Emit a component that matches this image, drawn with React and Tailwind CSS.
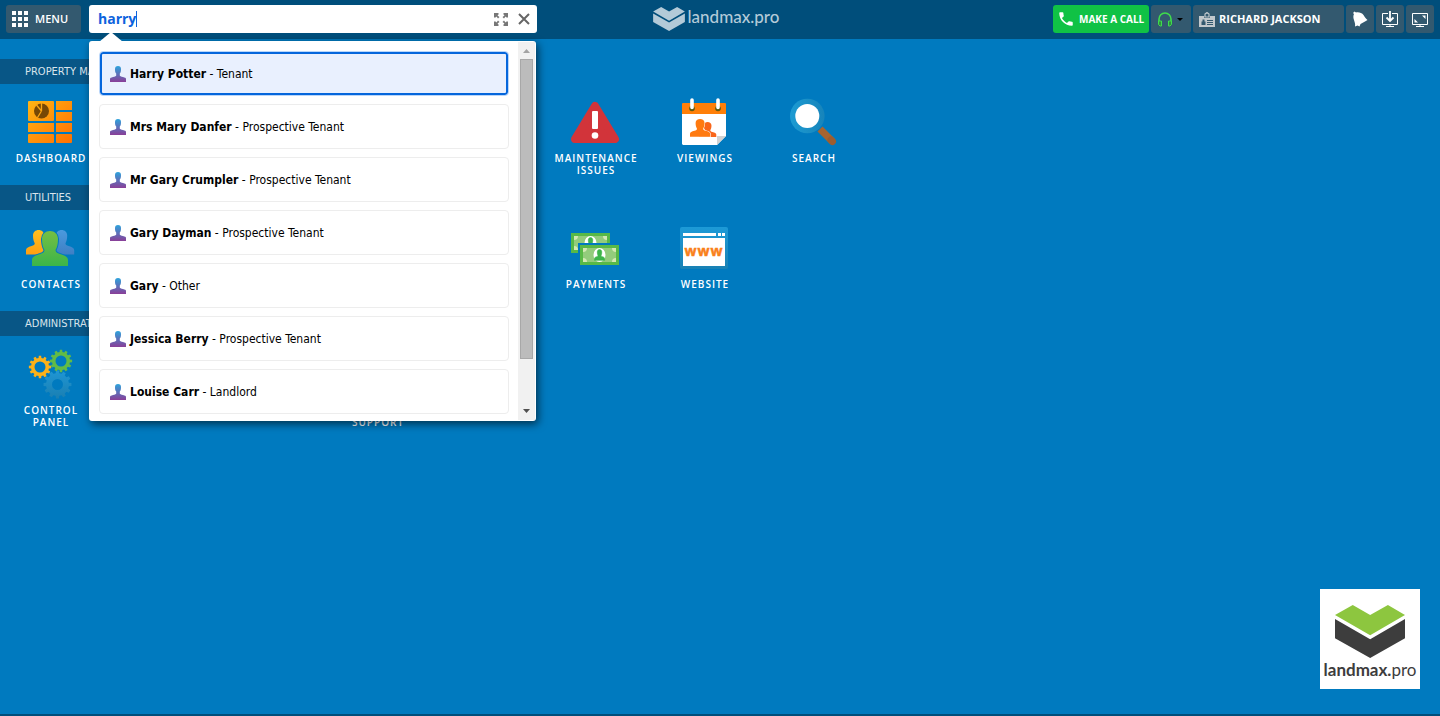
import { useState } from "react";
import clsx from "clsx";
import { MdPhone } from "react-icons/md";

const PERSON =
  "M0 35V29C0 26 3 24.5 8 23C11 22 12.5 21 12.5 19C11 16.5 10 13 10 8C10 3 13.5 0 18 0S26 3 26 8C26 13 25 16.5 23.5 19C23.5 21 25 22 28 23C33 24.5 36 26 36 29V35Z";

const RESULTS = [
  { name: "Harry Potter", role: "Tenant" },
  { name: "Mrs Mary Danfer", role: "Prospective Tenant" },
  { name: "Mr Gary Crumpler", role: "Prospective Tenant" },
  { name: "Gary Dayman", role: "Prospective Tenant" },
  { name: "Gary", role: "Other" },
  { name: "Jessica Berry", role: "Prospective Tenant" },
  { name: "Louise Carr", role: "Landlord" },
];

function gearPath(cx, cy, outer, inner, hole, teeth) {
  const points = [];
  const step = (Math.PI * 2) / teeth;
  for (let i = 0; i < teeth; i++) {
    const a = i * step;
    [
      [inner, -0.3],
      [outer, -0.2],
      [outer, 0.2],
      [inner, 0.3],
    ].forEach(([r, k]) => {
      const t = a + k * step;
      points.push(`${(cx + r * Math.cos(t)).toFixed(2)} ${(cy + r * Math.sin(t)).toFixed(2)}`);
    });
  }
  return `M${points.join("L")}ZM${cx - hole} ${cy}a${hole} ${hole} 0 1 0 ${hole * 2} 0a${hole} ${hole} 0 1 0 ${-hole * 2} 0Z`;
}

function TileSvg({ children }) {
  return (
    <svg viewBox="-1 0 50 48" className="h-12 w-[50px] overflow-visible" aria-hidden="true">
      {children}
    </svg>
  );
}

function DashboardIcon() {
  return (
    <TileSvg>
      <defs>
        <linearGradient id="dash" gradientUnits="userSpaceOnUse" x1="1" y1="3" x2="45" y2="45">
          <stop offset="0" stopColor="#ffb515" />
          <stop offset="1" stopColor="#ff7000" />
        </linearGradient>
      </defs>
      <g fill="url(#dash)">
        <rect x="1" y="3" width="26" height="20" rx="1" />
        <rect x="29" y="3" width="16" height="9" />
        <rect x="29" y="14" width="16" height="9" />
        <rect x="1" y="25" width="26" height="9" />
        <rect x="29" y="25" width="16" height="9" />
        <rect x="1" y="36" width="26" height="9" rx="1" />
        <rect x="29" y="36" width="16" height="9" rx="1" />
      </g>
      <circle cx="14.5" cy="13" r="7.5" fill="#774805" />
      <path d="M14.5 13V5M14.5 13L9 6.5M14.5 13L10.5 19.5" stroke="#fca613" strokeWidth="1.3" fill="none" />
    </TileSvg>
  );
}

function ContactsIcon() {
  return (
    <TileSvg>
      <defs>
        <linearGradient id="conY" x1="0" y1="0" x2="0" y2="1">
          <stop offset="0" stopColor="#ffc020" />
          <stop offset="1" stopColor="#ff9f10" />
        </linearGradient>
        <linearGradient id="conB" x1="0" y1="0" x2="0" y2="1">
          <stop offset="0" stopColor="#4a9ade" />
          <stop offset="1" stopColor="#3f7fc4" />
        </linearGradient>
        <linearGradient id="conG" x1="0" y1="0" x2="0" y2="1">
          <stop offset="0" stopColor="#76bf43" />
          <stop offset="1" stopColor="#3bb54a" />
        </linearGradient>
      </defs>
      <path d={PERSON} transform="translate(-1 6) scale(.7)" fill="url(#conY)" />
      <path d={PERSON} transform="translate(22 6) scale(.7)" fill="url(#conB)" />
      <path d={PERSON} transform="translate(5 7)" fill="url(#conG)" stroke="#007abf" strokeWidth="2" paintOrder="stroke" />
    </TileSvg>
  );
}

function ControlPanelIcon() {
  return (
    <TileSvg>
      <defs>
        <linearGradient id="gearB" x1="0" y1="0" x2="0" y2="1">
          <stop offset="0" stopColor="#1f96d4" />
          <stop offset="1" stopColor="#1a7fb2" />
        </linearGradient>
      </defs>
      <path d={gearPath(30.5, 34.5, 14, 11.5, 5.5, 12)} fill="url(#gearB)" fillRule="evenodd" />
      <path d={gearPath(13, 17, 11.2, 9, 5.5, 12)} fill="#fdb118" fillRule="evenodd" />
      <path d={gearPath(34, 11, 11.2, 9, 5.5, 12)} fill="#62bb46" fillRule="evenodd" />
    </TileSvg>
  );
}

function MaintenanceIcon() {
  return (
    <TileSvg>
      <path d="M23 8L43 41H3Z" fill="#d2343a" stroke="#d2343a" strokeWidth="8" strokeLinejoin="round" />
      <rect x="20" y="13" width="6" height="18" rx="1" fill="#fff" />
      <circle cx="23" cy="37.5" r="3.3" fill="#fff" />
    </TileSvg>
  );
}

function ViewingsIcon() {
  return (
    <TileSvg>
      <rect x="1" y="5" width="44" height="12" rx="1" fill="#ff7f08" />
      <path d="M1 16H45V38L36 47H2L1 46Z" fill="#fff" />
      <path d="M36 38H45L36 47Z" fill="#d2d2d2" />
      <circle cx="11" cy="10.5" r="2.8" fill="#5d5a10" />
      <circle cx="37" cy="10.5" r="2.8" fill="#5d5a10" />
      <path d="M11 2V9.500M37 2V9.500" stroke="#fff" strokeWidth="3.6" strokeLinecap="round" />
      <path d={PERSON} transform="translate(18 24) scale(.48 .43)" fill="#f9661a" />
      <path d={PERSON} transform="translate(9 21) scale(.56 .51)" fill="#ff7a10" stroke="#fff" strokeWidth="2" paintOrder="stroke" />
    </TileSvg>
  );
}

function SearchTileIcon() {
  return (
    <TileSvg>
      <defs>
        <linearGradient id="lens" x1="0" y1="0" x2="1" y2="0">
          <stop offset="0" stopColor="#1c9bd3" />
          <stop offset="1" stopColor="#1784ba" />
        </linearGradient>
      </defs>
      <path d="M30 31L43 44" stroke="#a8642f" strokeWidth="7" />
      <path d="M41 42L42.5 43.5" stroke="#9c5d30" strokeWidth="7" strokeLinecap="round" />
      <circle cx="17.3" cy="18" r="17.3" fill="url(#lens)" />
      <circle cx="17.3" cy="18" r="12" fill="#fff" />
    </TileSvg>
  );
}

function Note({ x, y }) {
  return (
    <g transform={`translate(${x} ${y})`}>
      <rect x="-2" y="-2" width="43" height="24" fill="#007abf" />
      <rect width="39" height="20" fill="#58b947" />
      <rect x="3" y="3" width="33" height="14" fill="#93cc7c" />
      <path d="M3 3H7Q7 7 3 7ZM36 3H32Q32 7 36 7ZM3 17H7Q7 13 3 13ZM36 17H32Q32 13 36 13Z" fill="#d4e9b4" />
      <ellipse cx="19.5" cy="10" rx="6" ry="7" fill="#fff" />
      <path d={PERSON} transform="translate(14.5 4.5) scale(.28 .31)" fill="#3db54a" stroke="#3db54a" strokeWidth="2" />
    </g>
  );
}

function PaymentsIcon() {
  return (
    <TileSvg>
      <Note x={-1} y={9} />
      <Note x={8} y={21} />
    </TileSvg>
  );
}

function WebsiteIcon() {
  return (
    <TileSvg>
      <defs>
        <linearGradient id="web" x1="0" y1="0" x2="0" y2="1">
          <stop offset="0" stopColor="#1d9ad7" />
          <stop offset="1" stopColor="#1981b4" />
        </linearGradient>
      </defs>
      <rect x="-1" y="3" width="48" height="42" rx="2" fill="url(#web)" />
      <path d="M2 9H35V12H2ZM37 9H40V12H37ZM41 9H44V12H41Z" fill="#fff" />
      <rect x="2" y="14" width="42" height="28" fill="#fff" />
      <text x="23" y="32" textAnchor="middle" fontSize="14" fontWeight="700" fill="#f97f1a" stroke="#f97f1a" strokeWidth=".5" fontFamily="Open Sans, sans-serif">
        www
      </text>
    </TileSvg>
  );
}

function LogoMark({ className, top, bottom }) {
  return (
    <svg viewBox="105 107 209 158" className={className} aria-hidden="true">
      <path d="M105 137L158 107L210 137L263 107L314 137L210 197Z" fill={top} />
      <path d="M105 149L210 209L314 149V206L210 265L105 206Z" fill={bottom} />
    </svg>
  );
}

const SECTIONS = [
  {
    title: "PROPERTY MANAGEMENT",
    tiles: [
      { label: "DASHBOARD", icon: DashboardIcon, place: "col-start-1" },
      { label: "MAINTENANCE ISSUES", icon: MaintenanceIcon, place: "col-start-6" },
      { label: "VIEWINGS", icon: ViewingsIcon, place: "col-start-7" },
      { label: "SEARCH", icon: SearchTileIcon, place: "col-start-8" },
    ],
  },
  {
    title: "UTILITIES",
    tiles: [
      { label: "CONTACTS", icon: ContactsIcon, place: "col-start-1" },
      { label: "PAYMENTS", icon: PaymentsIcon, place: "col-start-6" },
      { label: "WEBSITE", icon: WebsiteIcon, place: "col-start-7" },
    ],
  },
  {
    title: "ADMINISTRATION",
    tiles: [
      { label: "CONTROL PANEL", icon: ControlPanelIcon, place: "col-start-1" },
      { label: "SUPPORT", place: "col-start-4 pt-[66px]" },
    ],
  },
];

function Tile({ label, icon: Icon, place }) {
  return (
    <a
      href="#"
      className={clsx(
        "flex flex-col items-center gap-1.5 text-center font-['Open_Sans','Noto_Sans',sans-serif] text-[10px] leading-3 font-semibold tracking-[1px] text-white",
        place,
      )}
    >
      {Icon && <Icon />}
      <span className="w-[90px]">{label}</span>
    </a>
  );
}

function SearchBox() {
  const [query, setQuery] = useState("harry");

  return (
    <div className="relative ml-2 w-[448px]">
      <div className="flex h-7 items-center rounded-[3px] bg-white pr-[7px] pl-[9px]">
        <div className="flex flex-1 items-center">
          <input
            type="text"
            aria-label="Search"
            value={query}
            onChange={(e) => setQuery(e.target.value)}
            className="[field-sizing:content] font-['Open_Sans',sans-serif] text-[14px] leading-5 font-bold text-[#0d63dd] outline-none"
          />
          <span className="h-4 w-px bg-[#0d63dd]" />
        </div>
        <button type="button" aria-label="Expand" className="mr-2.5">
          <svg viewBox="0 0 14 13" className="h-[13px] w-3.5" fill="#777">
            <path d="M0 0H4.500V1.500L3.500 2.500L5.500 4L4 5.500L2.500 3.500L1.500 4.500H0ZM14 0H9.500V1.500L10.500 2.500L8.500 4L10 5.500L11.500 3.500L12.500 4.500H14ZM0 13H4.500V11.500L3.500 10.500L5.500 9L4 7.500L2.500 9.500L1.500 8.500H0ZM14 13H9.500V11.500L10.500 10.500L8.500 9L10 7.500L11.500 9.500L12.500 8.500H14Z" />
          </svg>
        </button>
        <button type="button" aria-label="Clear" onClick={() => setQuery("")}>
          <svg viewBox="0 0 12 12" className="size-3" fill="none" stroke="#666" strokeWidth="2">
            <path d="M1 1L11 11M11 1L1 11" />
          </svg>
        </button>
      </div>

      {/* Results */}
      <div className="absolute top-9 left-0 z-20 flex w-[447px] rounded-[3px] bg-white shadow-[2px_3px_8px_rgba(0,0,0,0.6)]">
        <svg viewBox="0 0 24 10" className="absolute -top-[9px] left-2.5 h-2.5 w-6" fill="#fff" aria-hidden="true">
          <path d="M0 10L12 0L24 10Z" />
        </svg>
        <div className="flex flex-1 flex-col gap-2 pt-2.5 pr-[9px] pb-[7px] pl-2.5">
          {RESULTS.map((r, i) => (
            <button
              key={r.name}
              type="button"
              className={clsx(
                "flex h-[45px] items-center gap-1 rounded-[4px] border px-2.5 text-left text-[12px] leading-4 text-black",
                i === 0
                  ? "border-[#b9d6fa] bg-[#e9f0fe] shadow-[inset_0_0_0_2px_#0566dc]"
                  : "border-[#ededed] bg-white",
              )}
            >
              <svg viewBox="0 0 16 16" className="size-4 shrink-0" aria-hidden="true">
                <defs>
                  <linearGradient id="person" x1="0" y1="0" x2="0" y2="1">
                    <stop offset="0" stopColor="#2da3dc" />
                    <stop offset="1" stopColor="#8a3f98" />
                  </linearGradient>
                </defs>
                <path
                  d="M0 16V13C0 12 1 11.500 3 11C5 10.500 6.200 10 6.200 9.500V7.500C5.200 6.500 5 5 5 3C5 1 6 0 8 0S11 1 11 3C11 5 10.800 6.500 9.800 7.500V9.500C9.800 10 11 10.500 13 11C15 11.500 16 12 16 13V16Z"
                  fill="url(#person)"
                />
              </svg>
              <span>
                <b>{r.name}</b> - {r.role}
              </span>
            </button>
          ))}
        </div>
        <div className="my-px mr-px flex w-[17px] flex-col items-center bg-[#f1f1f1]" aria-hidden="true">
          <svg viewBox="0 0 17 17" className="size-[17px]" fill="#a3a3a3">
            <path d="M5 11L8.500 7L12 11Z" />
          </svg>
          <div className="h-[300px] w-[13px] border border-[#a8a8a8] bg-[#bcbcbc]" />
          <svg viewBox="0 0 17 17" className="mt-auto size-[17px]" fill="#505050">
            <path d="M5 6L8.500 10L12 6Z" />
          </svg>
        </div>
      </div>
    </div>
  );
}

const toolButton = "flex h-7 items-center rounded-[3px] bg-[#33596f] text-white";

function Header() {
  return (
    <header className="grid h-[39px] grid-cols-[1fr_auto_1fr] items-start bg-[#004e7b] px-1.5 pt-[5px]">
      <div className="flex">
        <button type="button" className={clsx(toolButton, "w-[75px] gap-[7px] pl-1.5 font-['Open_Sans',sans-serif] text-[11px] font-semibold")}>
          <svg viewBox="0 0 16 16" className="size-4" fill="#fff" aria-hidden="true">
            <path d="M0 0H4V4H0ZM6 0H10V4H6ZM12 0H16V4H12ZM0 6H4V10H0ZM6 6H10V10H6ZM12 6H16V10H12ZM0 12H4V16H0ZM6 12H10V16H6ZM12 12H16V16H12Z" />
          </svg>
          MENU
        </button>
        <SearchBox />
      </div>

      <div className="flex h-7 items-center gap-[3px] pr-2">
        <LogoMark className="h-6 w-8" top="#b3cad8" bottom="#b3cad8" />
        <span className="pb-1 font-['Lato',sans-serif] text-[17px] leading-5 font-medium text-[#b3cad8]">landmax.pro</span>
      </div>

      <div className="flex justify-end gap-0.5">
        <button type="button" className="flex h-7 w-24 items-center gap-1 rounded-[3px] bg-[#10c245] pl-1 font-['Open_Sans',sans-serif] text-[10px] font-bold whitespace-nowrap text-white">
          <MdPhone className="size-[18px]" />
          MAKE A CALL
        </button>
        <button type="button" aria-label="Headset" className={clsx(toolButton, "w-10 gap-1 pl-[7px]")}>
          <svg viewBox="0 0 14 15" className="h-[15px] w-3.5" aria-hidden="true">
            <path d="M1 11V7A6 6 0 0 1 13 7V11" fill="none" stroke="#3fdc4c" strokeWidth="1.6" />
            <path d="M1 9H3.500V14H2L.5 12.500V9ZM13 9H10.500V14H12L13.500 12.500V9Z" fill="#2f8f3f" stroke="#3fdc4c" />
          </svg>
          <svg viewBox="0 0 6 3" className="ml-px h-[3px] w-1.5" aria-hidden="true">
            <path d="M0 0H6L3 3Z" fill="#000" />
          </svg>
        </button>
        <button type="button" className={clsx(toolButton, "w-[151px] gap-1 pl-1.5 font-['Open_Sans',sans-serif] text-[11px] font-bold")}>
          <svg viewBox="0 0 16 15" className="h-[15px] w-4" aria-hidden="true">
            <path d="M0 4H5V6H11V4H16V15H0Z" fill="#c2c8cc" />
            <path d="M6 5V2L8 .5L10 2V5Z" fill="none" stroke="#c2c8cc" strokeWidth="1.2" />
            <path d="M3.500 7.500H5.500V9.500H6.500V13H2.500V9.500H3.500ZM8 8H14V9H8ZM8 10H14V11H8ZM8 12H14V13H8Z" fill="#33596f" />
          </svg>
          RICHARD JACKSON
        </button>
        <button type="button" aria-label="Notifications" className={clsx(toolButton, "w-7 justify-center")}>
          <svg viewBox="0 0 16 16" className="size-4" fill="#fff" aria-hidden="true">
            <path d="M1 2L2.500 .5L4 1.500C7 1 10 2 11.500 4C12.500 5.500 13.500 7.500 15.500 9L13 10.500L8.500 13L7.500 15.500L5.500 14.500L3 15.500C3.500 12.500 2.500 11 2 9C1.300 7 1 5 2 3Z" />
          </svg>
        </button>
        <button type="button" aria-label="Download" className={clsx(toolButton, "w-7 justify-center")}>
          <svg viewBox="0 0 16 16" className="size-4" fill="none" stroke="#fff" aria-hidden="true">
            <path d="M6 2.500H.5V13.500H15.500V2.500H10M4 15.500H12M8 13V15" />
            <path d="M8 0V10M4.500 6.500L8 10L11.500 6.500" strokeWidth="1.8" />
          </svg>
        </button>
        <button type="button" aria-label="Full screen" className={clsx(toolButton, "w-7 justify-center")}>
          <svg viewBox="0 0 16 16" className="size-4" fill="none" stroke="#fff" aria-hidden="true">
            <path d="M.5 2.500H15.500V13.500H.5ZM4 15.500H12M8 13V15" />
            <path d="M10 4.500H13.500V8ZM2.500 8V11.500H6Z" fill="#fff" stroke="none" />
          </svg>
        </button>
      </div>
    </header>
  );
}

export default function App() {
  return (
    <div className="flex min-h-screen flex-col bg-[#007abf] font-['DejaVu_Sans_Condensed','Noto_Sans',sans-serif]">
      <Header />

      <main className="flex-1 pt-5">
        {SECTIONS.map((section) => (
          <section key={section.title} className="h-[126px]">
            <h2 className="h-[25px] w-[210px] bg-[#085686] pl-[25px] text-[11px] leading-[26px] text-[#d9e4ec]">
              {section.title}
            </h2>
            <div className="grid grid-cols-[repeat(8,102px)] items-start gap-x-[7px] pt-3.5">
              {section.tiles.map((tile) => (
                <Tile key={tile.label} {...tile} />
              ))}
            </div>
          </section>
        ))}
      </main>

      <div className="flex justify-end pr-5 pb-[25px]">
        <div className="flex size-[100px] flex-col items-center bg-white pt-4">
          <LogoMark className="h-[53px] w-[70px]" top="#8dc63f" bottom="#3d3d3d" />
          <p className="font-['Lato',sans-serif] text-[17px] leading-6 text-[#3d3d3d]">
            <b>landmax.</b>pro
          </p>
        </div>
      </div>
      <footer className="h-0.5 bg-[#004e7b]" />
    </div>
  );
}
